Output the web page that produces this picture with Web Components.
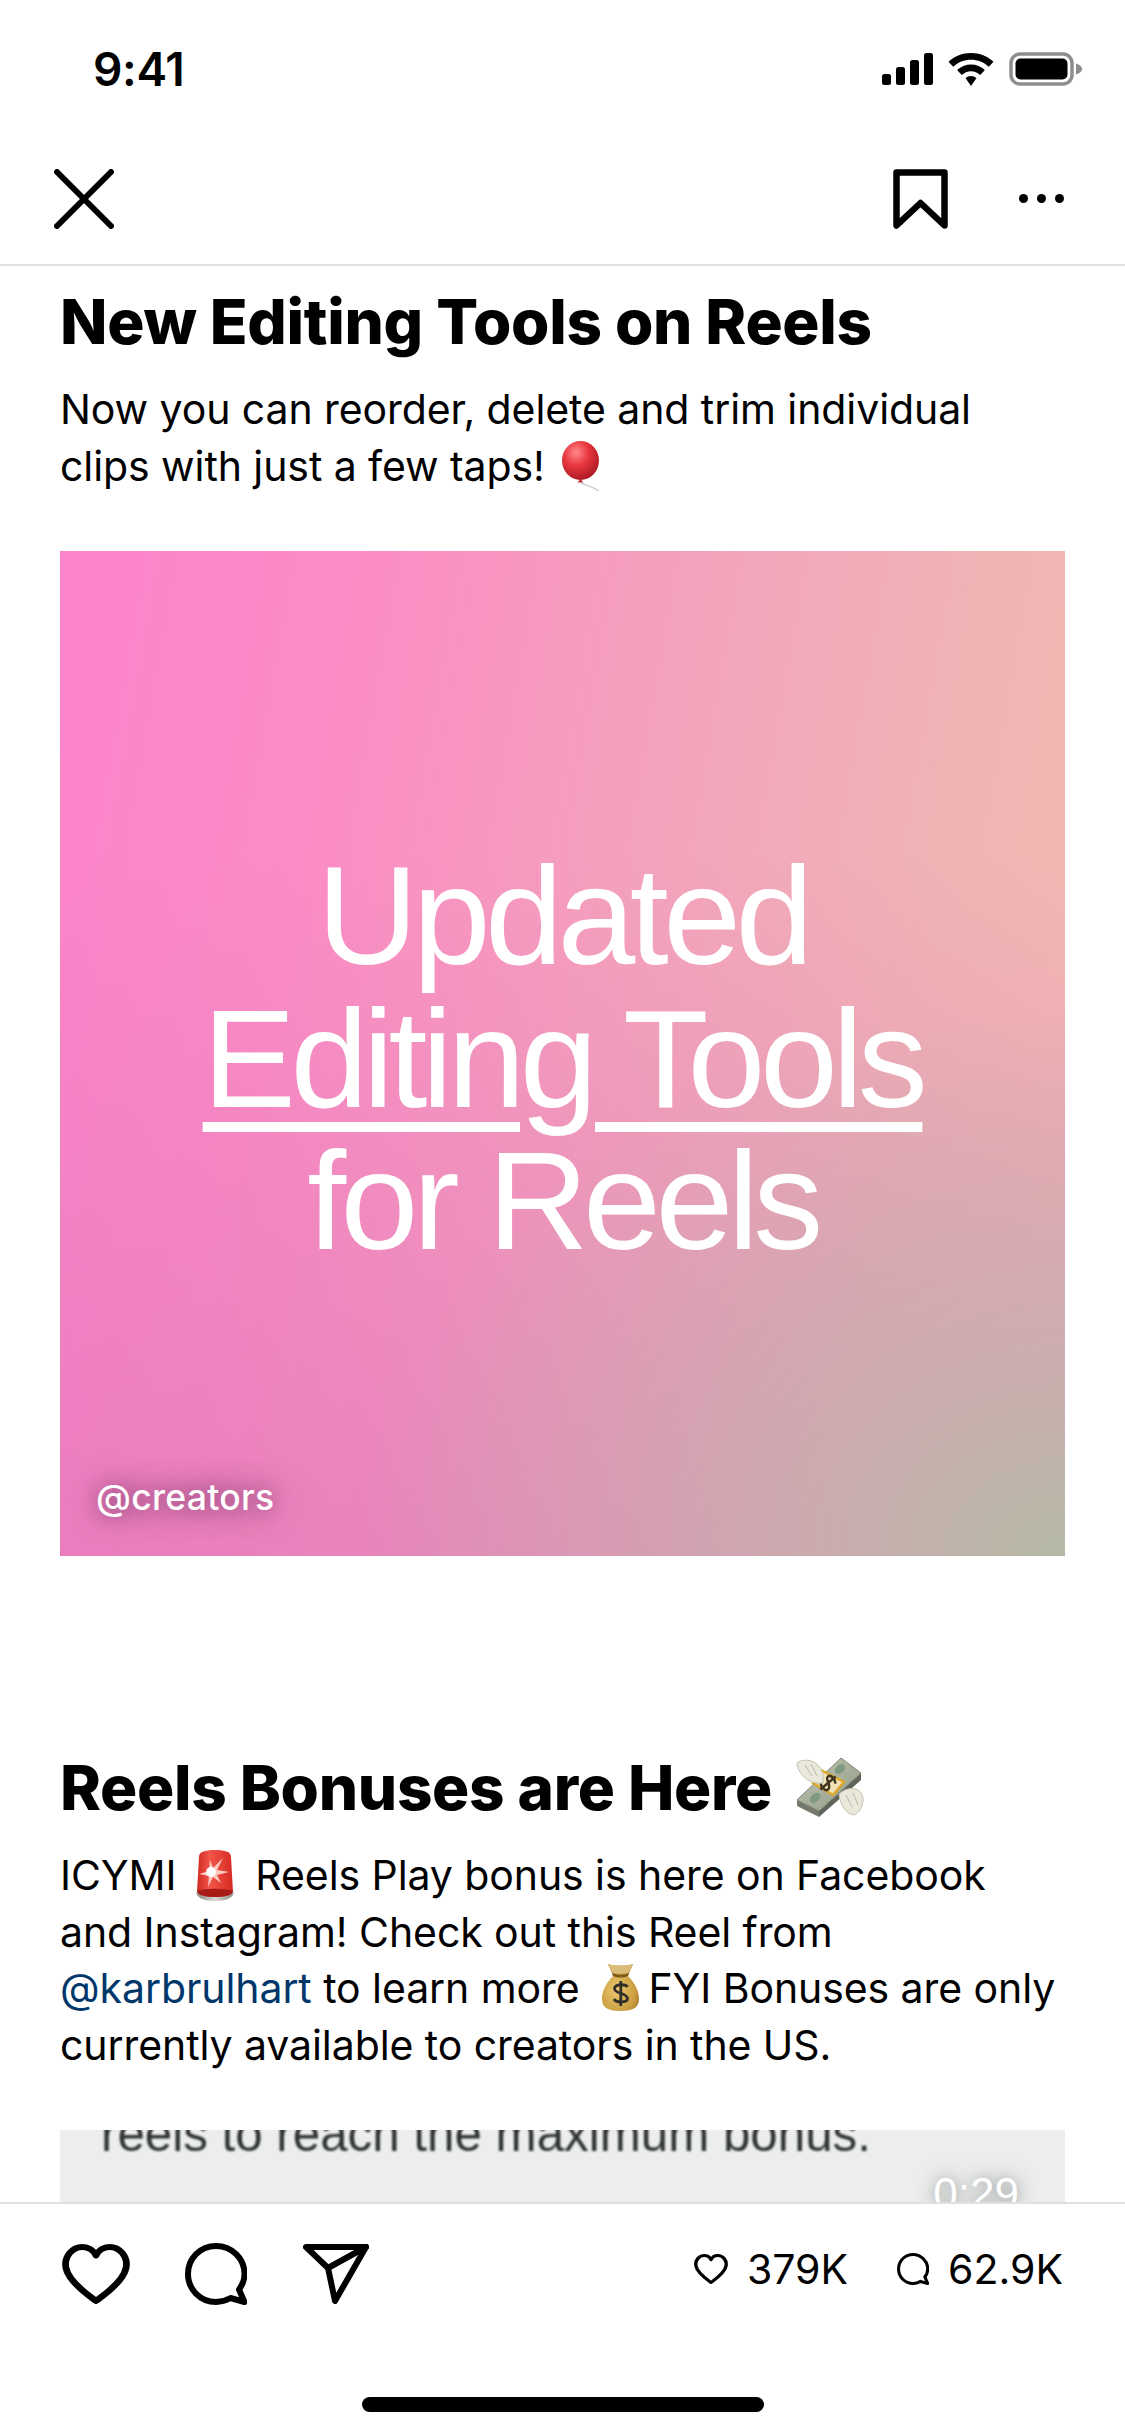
<!DOCTYPE html>
<html lang="en">
<head>
<meta charset="utf-8">
<title>New Editing Tools on Reels</title>
<style>
  html, body { margin: 0; background: #fff; }
  body { font-family: Inter, "Liberation Sans", sans-serif; color: #000; }
</style>
</head>
<body>
<app-screen>
  <status-bar slot="top" time="9:41"></status-bar>
  <nav-bar slot="top"></nav-bar>

  <article-block heading-top="20" gap="23">
    <span slot="title">New Editing Tools on Reels</span>
    Now you can reorder, delete and trim individual clips with just a few taps! <app-emoji name="balloon"></app-emoji>
  </article-block>
  <promo-card handle="@creators">
    Updated<br><u>Editing Tools</u><br>for Reels
  </promo-card>
  <article-block heading-top="196" gap="23">
    <span slot="title">Reels Bonuses are Here <app-emoji name="wings"></app-emoji></span>
    ICYMI <app-emoji name="light"></app-emoji> Reels Play bonus is here on Facebook and Instagram! Check out this Reel from <a>@karbrulhart</a> to learn more <app-emoji name="bag"></app-emoji> FYI Bonuses are only currently available to creators in the US.
  </article-block>
  <video-card duration="0:29">reels to reach the maximum bonus.</video-card>

  <bottom-bar slot="bottom" likes="379K" comments="62.9K"></bottom-bar>
</app-screen>

<script>
const screenTemplate = document.createElement('template')
screenTemplate.innerHTML = `
  <style>
    :host {
      display: flex;
      flex-direction: column;
      width: 1125px;
      height: 2436px;
      overflow: hidden;
      background: #fff;
    }
    main {
      flex: 1;
      min-height: 0;
      overflow: hidden;
    }
  </style>
  <slot name="top"></slot>
  <main><slot></slot></main>
  <slot name="bottom"></slot>
`

customElements.define('app-screen', class extends HTMLElement {
  constructor () {
    super()
    this.attachShadow({ mode: 'open' }).appendChild(screenTemplate.content.cloneNode(true))
  }
})

customElements.define('status-bar', class extends HTMLElement {
  constructor () {
    super()
    this.attachShadow({ mode: 'open' }).innerHTML = `
      <style>
        :host {
          display: flex;
          align-items: center;
          justify-content: space-between;
          height: 138px;
          padding: 0 43px 0 93px;
          box-sizing: border-box;
        }
        #time {
          font: 600 46px/1 Inter, "Liberation Sans", sans-serif;
          letter-spacing: -.3px;
        }
        #icons { display: flex; align-items: center; gap: 15px; }
        svg { display: block; }
      </style>
      <div id="time">${this.getAttribute('time')}</div>
      <div id="icons">
        <svg width="51" height="32" viewBox="0 0 51 32">
          <rect x="0" y="21" width="9" height="11" rx="2.5"/>
          <rect x="14" y="14" width="9" height="18" rx="2.5"/>
          <rect x="28" y="7" width="9" height="25" rx="2.5"/>
          <rect x="42" y="0" width="9" height="32" rx="2.5"/>
        </svg>
        <svg width="46" height="33" viewBox="0 0 46 33">
          <path d="M23 0C14.5 0 6.6 3.300 0.500 8.800L5.200 13.800C10 9.400 16.200 6.800 23 6.800S36 9.400 40.800 13.800L45.500 8.800C39.400 3.300 31.500 0 23 0Z"/>
          <path d="M23 11.500C17.700 11.500 12.800 13.500 9.100 17L13.800 22C16.300 19.700 19.500 18.300 23 18.300S29.700 19.700 32.200 22L36.900 17C33.200 13.500 28.300 11.500 23 11.500Z"/>
          <path d="M23 23C20.800 23 19 23.800 17.600 25.200L23 33L28.400 25.200C27 23.800 25.200 23 23 23Z"/>
        </svg>
        <svg width="73" height="34" viewBox="0 0 73 34">
          <rect x="2" y="2" width="61" height="30" rx="9" fill="none" stroke="#8e8e8e" stroke-width="3.500"/>
          <rect x="6.500" y="6.500" width="52" height="21" rx="5"/>
          <path d="M67 11.500C70.500 12.500 73 14.500 73 17S70.500 21.500 67 22.500Z" fill="#8e8e8e"/>
        </svg>
      </div>
    `
  }
})

customElements.define('nav-bar', class extends HTMLElement {
  constructor () {
    super()
    this.attachShadow({ mode: 'open' }).innerHTML = `
      <style>
        :host {
          display: flex;
          align-items: center;
          justify-content: space-between;
          height: 128px;
          padding: 0 61px 5px 54px;
          box-sizing: border-box;
          border-bottom: 2px solid #e0e0e0;
        }
        #right { display: flex; align-items: center; gap: 71px; }
        svg { display: block; }
      </style>
      <svg width="60" height="60" viewBox="0 0 60 60" fill="none" stroke="#000" stroke-width="6" stroke-linecap="round">
        <path d="M3 3L57 57M57 3L3 57"/>
      </svg>
      <div id="right">
        <svg width="55" height="60" viewBox="0 0 55 60" fill="none" stroke="#000" stroke-width="6.500" stroke-linejoin="round" stroke-linecap="round">
          <path d="M3.500 3.500H51.500V56.500L27.500 34L3.500 56.500Z"/>
        </svg>
        <svg width="45" height="9" viewBox="0 0 45 9">
          <circle cx="4.500" cy="4.500" r="4.500"/><circle cx="22.500" cy="4.500" r="4.500"/><circle cx="40.500" cy="4.500" r="4.500"/>
        </svg>
      </div>
    `
  }
})

customElements.define('article-block', class extends HTMLElement {
  constructor () {
    super()
    this.attachShadow({ mode: 'open' }).innerHTML = `
      <style>
        :host {
          display: block;
          padding: ${this.getAttribute('heading-top')}px 60px 0;
        }
        h2 {
          margin: 0 0 ${this.getAttribute('gap')}px;
          font: 800 62px/72px Inter, "Liberation Sans", sans-serif;
          letter-spacing: -.3px;
          white-space: nowrap;
        }
        p {
          margin: 0;
          font: 400 41px/56.500px Inter, "Liberation Sans", sans-serif;
          letter-spacing: -.08px;
        }
        ::slotted(a) { color: #00376b; }
      </style>
      <h2><slot name="title"></slot></h2>
      <p><slot></slot></p>
    `
  }
})

customElements.define('promo-card', class extends HTMLElement {
  constructor () {
    super()
    this.attachShadow({ mode: 'open' }).innerHTML = `
      <style>
        :host {
          display: block;
          margin: 57px 60px 0;
          height: 1005px;
          position: relative;
          background:
            radial-gradient(ellipse 70% 55% at 100% 100%, #b6baa7 0%, rgba(196,178,172,.8) 35%, rgba(220,170,190,0) 100%),
            linear-gradient(180deg, rgba(226,118,188,0) 30%, rgba(222,118,184,.6) 100%),
            linear-gradient(100deg, #fe82cb 0%, #fb8cc5 25%, #f4a3bc 55%, #efb5b4 80%, #f5bdb2 100%);
        }
        #headline {
          position: absolute;
          left: 0;
          right: 0;
          top: 294px;
          text-align: center;
          color: #fff;
          font: 400 140px/142.500px "Liberation Sans", Arial, sans-serif;
          letter-spacing: -5.500px;
        }
        ::slotted(u) {
          text-decoration-thickness: 10px;
          text-underline-offset: 15px;
        }
        #handle {
          position: absolute;
          left: 36px;
          bottom: 36px;
          color: #fff;
          font: 500 35.500px/44px Inter, "Liberation Sans", sans-serif;
          letter-spacing: .3px;
          text-shadow: 0 0 30px rgba(90,40,80,.75), 0 0 16px rgba(90,40,80,.3);
        }
      </style>
      <div id="headline"><slot></slot></div>
      <div id="handle">${this.getAttribute('handle')}</div>
    `
  }
})

customElements.define('video-card', class extends HTMLElement {
  constructor () {
    super()
    this.attachShadow({ mode: 'open' }).innerHTML = `
      <style>
        :host {
          display: block;
          position: relative;
          margin: 57px 60px 0;
          height: 500px;
          background: #eceeed;
          overflow: hidden;
        }
        #caption {
          position: absolute;
          left: 41px;
          top: -22px;
          font: 400 49.300px/52px "Liberation Sans", Arial, sans-serif;
          color: #2f3232;
          filter: blur(.8px);
          white-space: nowrap;
        }
        #time {
          position: absolute;
          right: 46px;
          top: 42px;
          color: #fff;
          font: 400 44px/44px "Liberation Sans", Arial, sans-serif;
          text-shadow: 0 0 22px rgba(0,0,0,.4), 0 0 10px rgba(0,0,0,.15);
        }
      </style>
      <div id="caption"><slot></slot></div>
      <div id="time">${this.getAttribute('duration')}</div>
    `
  }
})

customElements.define('bottom-bar', class extends HTMLElement {
  constructor () {
    super()
    const heart = 'M30 57C27 54 6 39 3.500 24C1.500 12 9.500 3 18 3C23.500 3 28 6.500 30 11.500C32 6.500 36.500 3 42 3C50.500 3 58.500 12 56.500 24C54 39 33 54 30 57Z'
    const bubble = 'M54 46.500C57.500 41.800 59.500 36.500 59.500 31C59.500 15.500 46.800 3 31 3S3 15.500 3 31S15.500 59 31 59C36 59 41 57.500 45.500 55L59.500 59Z'
    this.attachShadow({ mode: 'open' }).innerHTML = `
      <style>
        :host {
          display: block;
          height: 234px;
          box-sizing: border-box;
          border-top: 2px solid #e0e0e0;
          position: relative;
        }
        #row {
          display: flex;
          align-items: center;
          justify-content: space-between;
          height: 139px;
          padding: 0 62px;
        }
        #actions { display: flex; align-items: center; gap: 55px; }
        #actions svg:nth-child(3) { margin-left: 1px; }
        #stats {
          display: flex;
          align-items: center;
          gap: 49px;
          font: 400 41px/1 Inter, "Liberation Sans", sans-serif;
          margin-top: -9px;
        }
        .stat { display: flex; align-items: center; gap: 19px; }
        svg { display: block; }
        #home {
          position: absolute;
          left: 362px;
          bottom: 24px;
          width: 402px;
          height: 15px;
          border-radius: 8px;
          background: #000;
        }
      </style>
      <div id="row">
        <div id="actions">
          <svg width="68" height="60" viewBox="0 0 60 60" preserveAspectRatio="none" fill="none" stroke="#000" stroke-width="6" stroke-linejoin="round"><path d="${heart}"/></svg>
          <svg width="62" height="62" viewBox="0 0 62 62" fill="none" stroke="#000" stroke-width="6" stroke-linejoin="round"><path d="${bubble}"/></svg>
          <svg width="66" height="60" viewBox="0 0 66 60" fill="none" stroke="#000" stroke-width="6" stroke-linejoin="round" stroke-linecap="round"><path d="M3 3H63L32 57L25 24Z"/><path d="M25 24L63 3"/></svg>
        </div>
        <div id="stats">
          <div class="stat">
            <svg width="34" height="30" viewBox="0 0 60 60" preserveAspectRatio="none" fill="none" stroke="#000" stroke-width="6" stroke-linejoin="round"><path d="${heart}"/></svg>
            <span>${this.getAttribute('likes')}</span>
          </div>
          <div class="stat">
            <svg width="32" height="32" viewBox="0 0 62 62" fill="none" stroke="#000" stroke-width="6" stroke-linejoin="round"><path d="${bubble}"/></svg>
            <span>${this.getAttribute('comments')}</span>
          </div>
        </div>
      </div>
      <div id="home"></div>
    `
  }
})

const emojiArt = {
  balloon: {
    w: 38, h: 50, drop: 10, left: 6, right: 0,
    art: `
      <defs><radialGradient id="b" cx=".38" cy=".3" r=".75"><stop offset="0" stop-color="#ff8a8c"/><stop offset=".45" stop-color="#e8373f"/><stop offset="1" stop-color="#a81722"/></radialGradient></defs>
      <ellipse cx="18.500" cy="19.500" rx="18.500" ry="19.500" fill="url(#b)"/>
      <path d="M15.500 41.500H21.500L18.500 38Z" fill="#c72530"/>
      <path d="M18.500 41.500C21 44 30 45 37 50" stroke="#c9c9c9" stroke-width="1.200" fill="none"/>
    `
  },
  wings: {
    w: 70, h: 60, drop: 7, left: 11, right: 0,
    art: `
      <defs><linearGradient id="n" x1="0" y1="0" x2="1" y2="1"><stop offset="0" stop-color="#c2c9b4"/><stop offset="1" stop-color="#8f9884"/></linearGradient></defs>
      <path d="M1 43L23 54V60L1 49Z" fill="#75796c"/>
      <path d="M23 54L65 16V23L23 60Z" fill="#5f6358"/>
      <path d="M1 43L45 1L65 16L23 54Z" fill="url(#n)" stroke="#7c8374" stroke-width="1"/>
      <ellipse cx="44" cy="12" rx="6" ry="4" transform="rotate(-40 44 12)" fill="#7f9a80"/>
      <ellipse cx="19" cy="41" rx="6" ry="4" transform="rotate(-40 19 41)" fill="#7f9a80"/>
      <path d="M25 13L48 25L37 38L17 26Z" fill="#f2e2b8" stroke="#dca72a" stroke-width="2.500"/>
      <g transform="rotate(50 32 26)" fill="none" stroke="#3e3620" stroke-width="2.500">
        <path d="M37 21C35 18 27 18 27 22C27 26 37 25 37 30C37 34 29 34 27 31"/>
        <path d="M32 16V36"/>
      </g>
      <path d="M1 6C6 2 16 2 22 8C26 12 28 19 27 26C19 27 12 24 8 20C4 16 1 11 1 6Z" fill="#eae8da" stroke="#c4c3b4" stroke-width="1"/>
      <path d="M9 8L16 19M15 7L21 19" stroke="#b8b7a8" stroke-width="1" fill="none"/>
      <path d="M67 42C67 50 63 56 58 58C50 57 44 48 43 37C48 32 56 30 62 33C65 35 67 38 67 42Z" fill="#eae8da" stroke="#c4c3b4" stroke-width="1"/>
      <path d="M50 38L56 50M57 36L62 48" stroke="#b8b7a8" stroke-width="1" fill="none"/>
    `
  },
  light: {
    w: 38, h: 51, drop: 11, left: 8, right: 10,
    art: `
      <defs>
        <linearGradient id="l" x1="0" x2="1"><stop offset="0" stop-color="#cf2a22"/><stop offset=".35" stop-color="#f2554a"/><stop offset="1" stop-color="#d62a22"/></linearGradient>
        <linearGradient id="s" x1="0" x2="1"><stop offset="0" stop-color="#8a8a86"/><stop offset=".5" stop-color="#d8d8d2"/><stop offset="1" stop-color="#8a8a86"/></linearGradient>
      </defs>
      <path d="M3 7C3 2 8 0 19 0S35 2 35 7L37 42H1Z" fill="url(#l)"/>
      <path d="M0 41C0 48 8 51 19 51S38 48 38 41C38 45 30 46 19 46S0 45 0 41Z" fill="url(#s)"/>
      <path d="M1 41C1 45 8 47 19 47S37 45 37 41C30 38 8 38 1 41Z" fill="#a81b16"/>
      <path d="M14 10L17 18L27 8L21 20L33 22L21 25L25 33L17 27L12 37L13 26L3 24L13 21Z" fill="#ffc9c2"/>
      <circle cx="15" cy="22" r="5" fill="#fff"/>
    `
  },
  bag: {
    w: 37, h: 48, drop: 8, left: 11, right: -2,
    art: `
      <defs>
        <radialGradient id="m" cx=".4" cy=".55" r=".7"><stop offset="0" stop-color="#ecca72"/><stop offset=".75" stop-color="#c99a3c"/><stop offset="1" stop-color="#9d7426"/></radialGradient>
      </defs>
      <path d="M6 1C12 3 25 3 31 1L26 13C33 20 37 28 37 36C37 45 30 48 18.500 48S0 45 0 36C0 28 4 20 11 13Z" fill="url(#m)"/>
      <path d="M6 1C12 3 25 3 31 1L27 9C21 11 16 11 10 9Z" fill="#d9bb7a"/>
      <path d="M11 13C16 15 21 15 26 13L27 10C21 12 16 12 10 10Z" fill="#7c5a1c"/>
      <g fill="none" stroke="#33302a" stroke-width="2.800">
        <path d="M25.500 24C24 21 13 20.500 12.500 25.500C12 31 25.500 29.500 25.500 35.500C25.500 40 14 40 12 36"/>
        <path d="M18.800 18V43"/>
      </g>
    `
  }
}

customElements.define('app-emoji', class extends HTMLElement {
  constructor () {
    super()
    const item = emojiArt[this.getAttribute('name')]
    this.attachShadow({ mode: 'open' }).innerHTML = `
      <style>
        :host {
          display: inline-block;
          width: ${item.w}px;
          height: ${item.h}px;
          line-height: 0;
          margin: -20px ${item.right}px -${item.drop}px ${item.left}px;
        }
        svg { display: block; }
      </style>
      <svg width="${item.w}" height="${item.h}" viewBox="0 0 ${item.w} ${item.h}">${item.art}</svg>
    `
  }
})
</script>
</body>
</html>
